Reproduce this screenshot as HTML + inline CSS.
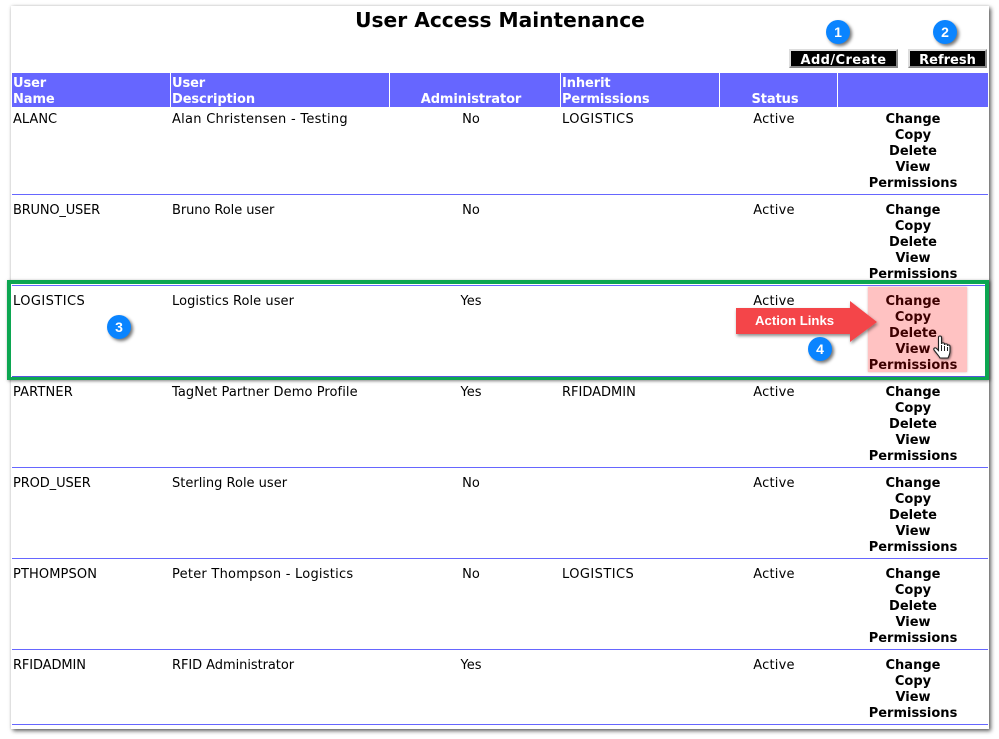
<!DOCTYPE html>
<html><head><meta charset="utf-8">
<style>
html,body{margin:0;padding:0;background:#fff}
body{width:999px;height:739px;position:relative;overflow:hidden;font-family:"DejaVu Sans",sans-serif;font-size:13px;color:#000}
.a{position:absolute;white-space:nowrap;line-height:16px}
.c{transform:translateX(-50%);text-align:center}
.s{letter-spacing:.2px}
.h{font-weight:bold;color:#fff;letter-spacing:-.1px}
.l{font-weight:bold;transform:translateX(-50%);text-align:center;position:absolute;left:913px;white-space:nowrap;line-height:16px;font-size:13px}
.r{position:absolute;left:12px;width:976px;height:1px;background:#6666ff}
.v{position:absolute;top:73px;width:1px;height:34px;background:#fff}
.b{position:absolute;width:24px;height:24px;border-radius:50%;background:#0a84ff;color:#fff;font:bold 14px/24px "Liberation Sans",sans-serif;text-align:center;box-shadow:2px 2px 3px rgba(0,0,0,.55)}
.btn{position:absolute;background:#000;color:#fff;font-weight:bold;text-align:center;height:15px;line-height:19px;border:2px solid;border-color:#ddd #888 #888 #ddd;font-size:13px}
</style></head><body>
<div style="position:absolute;left:11px;top:6px;width:978px;height:723px;background:#fff;box-shadow:2px 2px 4px rgba(0,0,0,.6),0 0 3px rgba(0,0,0,.15)"></div>

<div class="a c" style="left:500px;top:8px;font-size:20.2px;line-height:24px;font-weight:bold">User Access Maintenance</div>

<div class="btn" style="left:789px;top:49px;width:105px;letter-spacing:.4px">Add/Create</div>
<div class="btn" style="left:908px;top:49px;width:75px">Refresh</div>

<div style="position:absolute;left:12px;top:73px;width:976px;height:34px;background:#6666ff"></div>
<div class="v" style="left:170px"></div><div class="v" style="left:389px"></div><div class="v" style="left:560px"></div><div class="v" style="left:719px"></div><div class="v" style="left:837px"></div>
<div class="a h" style="left:13px;top:76px">User<br>Name</div>
<div class="a h" style="left:172px;top:76px">User<br>Description</div>
<div class="a h c" style="left:471px;top:92px">Administrator</div>
<div class="a h" style="left:562px;top:76px">Inherit<br>Permissions</div>
<div class="a h c" style="left:775px;top:92px">Status</div>

<div class="r" style="top:194px"></div><div class="r" style="top:285px"></div><div class="r" style="top:376px;height:2px;background:#5555dd"></div><div class="r" style="top:467px"></div><div class="r" style="top:558px"></div><div class="r" style="top:649px"></div><div class="r" style="top:724px"></div>

<div class="a" style="left:13px;top:112px">ALANC</div><div class="a" style="left:172px;top:112px;letter-spacing:.27px">Alan Christensen - Testing</div><div class="a c" style="left:471px;top:112px">No</div><div class="a" style="left:562px;top:112px;letter-spacing:.44px">LOGISTICS</div><div class="a c s" style="left:774px;top:112px">Active</div>
<div class="l" style="top:112px">Change<br>Copy<br>Delete<br>View<br>Permissions</div>

<div class="a" style="left:13px;top:203px;letter-spacing:-.2px">BRUNO_USER</div><div class="a" style="left:172px;top:203px;letter-spacing:-.07px">Bruno Role user</div><div class="a c" style="left:471px;top:203px">No</div><div class="a c s" style="left:774px;top:203px">Active</div>
<div class="l" style="top:203px">Change<br>Copy<br>Delete<br>View<br>Permissions</div>

<div style="position:absolute;left:868px;top:287px;width:99px;height:85px;background:#ffc2c2;box-shadow:0 0 2px rgba(180,100,100,.5)"></div>
<div class="a" style="left:13px;top:294px;letter-spacing:.44px">LOGISTICS</div><div class="a" style="left:172px;top:294px;letter-spacing:.06px">Logistics Role user</div><div class="a c" style="left:471px;top:294px">Yes</div><div class="a c s" style="left:774px;top:294px">Active</div>
<div class="l" style="top:294px;color:#3c0000">Change<br>Copy<br>Delete<br>View<br>Permissions</div>

<div class="a" style="left:13px;top:385px;letter-spacing:.14px">PARTNER</div><div class="a" style="left:172px;top:385px;letter-spacing:.08px">TagNet Partner Demo Profile</div><div class="a c" style="left:471px;top:385px">Yes</div><div class="a" style="left:562px;top:385px">RFIDADMIN</div><div class="a c s" style="left:774px;top:385px">Active</div>
<div class="l" style="top:385px">Change<br>Copy<br>Delete<br>View<br>Permissions</div>

<div class="a" style="left:13px;top:476px;letter-spacing:-.11px">PROD_USER</div><div class="a" style="left:172px;top:476px">Sterling Role user</div><div class="a c" style="left:471px;top:476px">No</div><div class="a c s" style="left:774px;top:476px">Active</div>
<div class="l" style="top:476px">Change<br>Copy<br>Delete<br>View<br>Permissions</div>

<div class="a" style="left:13px;top:567px;letter-spacing:.11px">PTHOMPSON</div><div class="a" style="left:172px;top:567px;letter-spacing:.24px">Peter Thompson - Logistics</div><div class="a c" style="left:471px;top:567px">No</div><div class="a" style="left:562px;top:567px;letter-spacing:.44px">LOGISTICS</div><div class="a c s" style="left:774px;top:567px">Active</div>
<div class="l" style="top:567px">Change<br>Copy<br>Delete<br>View<br>Permissions</div>

<div class="a" style="left:13px;top:658px;letter-spacing:-.11px">RFIDADMIN</div><div class="a" style="left:172px;top:658px;letter-spacing:-.06px">RFID Administrator</div><div class="a c" style="left:471px;top:658px">Yes</div><div class="a c s" style="left:774px;top:658px">Active</div>
<div class="l" style="top:658px">Change<br>Copy<br>View<br>Permissions</div>

<div style="position:absolute;left:7px;top:280px;width:974px;height:93px;border:solid #0ca651;border-width:4px 4px 3px 4px;box-shadow:1px 1px 3px rgba(0,0,0,.5)"></div>

<svg style="position:absolute;left:730px;top:296px" width="150" height="52" viewBox="0 0 150 52">
<defs><filter id="s" x="-10%" y="-10%" width="120%" height="130%"><feDropShadow dx="1" dy="2" stdDeviation="1.500" flood-color="#000" flood-opacity=".45"/></filter></defs>
<path d="M6 12H120V5L147 26 120 46V38H6Z" fill="#f44448" filter="url(#s)"/>
<text x="25" y="29" font-family="Liberation Sans,sans-serif" font-size="13.200" font-weight="bold" fill="#fff">Action Links</text>
</svg>

<svg style="position:absolute;left:933px;top:335px;filter:drop-shadow(1px 1px 1px rgba(0,0,0,.5))" width="19" height="25" viewBox="0 0 19 25">
<path d="M5.500 2.500c0-2 3-2 3 0V9c0-1.500 3-1.500 3 0v1c0-1.500 3-1.500 3 0v1c0-1.500 2.500-1.500 2.500.5V16c0 3-1 5-2 7H7c-1-2-3-4-6-8-1-1.500 1-3 2.500-1.500l2 2Z" fill="#fff" stroke="#222" stroke-width="1.100"/>
<path d="M8.500 10v6M11.500 11v5M14.500 12v4" stroke="#222" stroke-width="1" fill="none"/>
</svg>

<div class="b" style="left:826px;top:20px">1</div>
<div class="b" style="left:933px;top:20px">2</div>
<div class="b" style="left:107px;top:315px">3</div>
<div class="b" style="left:808px;top:337px">4</div>
</body></html>
